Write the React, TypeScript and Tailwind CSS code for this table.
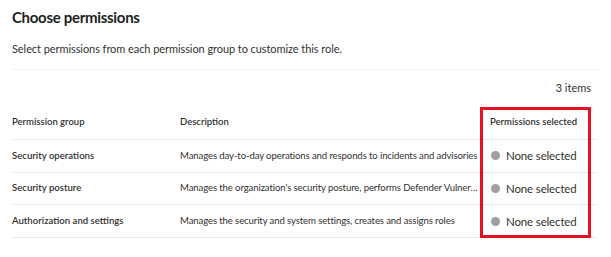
const rows = [
  {
    group: 'Security operations',
    desc: 'Manages day-to-day operations and responds to incidents and advisories',
  },
  {
    group: 'Security posture',
    desc: "Manages the organization's security posture, performs Defender Vulnerability Management operations",
  },
  {
    group: 'Authorization and settings',
    desc: 'Manages the security and system settings, creates and assigns roles',
  },
]

export default function App() {
  return (
    <div className="w-[611px] h-[257px] bg-white px-3 pt-[5px] text-[#323130] [font-family:Lato,sans-serif] overflow-hidden">
      <h1 className="text-[15px] leading-[24px] font-bold tracking-[-0.3px] text-[#201f1e]">Choose permissions</h1>
      <p className="mt-[12px] text-[11px] leading-[16px] tracking-[-0.07px]">
        Select permissions from each permission group to customize this role.
      </p>
      <div className="mt-[12px] mr-[1px] border-t border-[#f3f2f1]" />
      <div className="mt-[10px] pr-[8px] text-right text-[11px] leading-[16px]">3 items</div>

      <div className="relative mt-[11px] w-[586px]">
        <div className="grid grid-cols-[168px_310px_108px] h-[33px] items-center border-b border-[#edebe9] text-[9.5px] font-semibold pb-[2px]">
          <div>Permission group</div>
          <div>Description</div>
          <div className="whitespace-nowrap">Permissions selected</div>
        </div>
        {rows.map((r) => (
          <div
            key={r.group}
            className="grid grid-cols-[168px_310px_108px] h-[32.7px] items-center border-b border-[#edebe9] text-[9.6px]"
          >
            <div className="font-semibold">{r.group}</div>
            <div className="truncate pr-[10px] tracking-[-0.12px]">{r.desc}</div>
            <div className="flex items-center gap-[6px] pl-[1px] text-[11.5px] tracking-[-0.15px] whitespace-nowrap">
              <span className="w-[9px] h-[9px] rounded-full bg-[#a19f9d]" />
              None selected
            </div>
          </div>
        ))}
        <div className="absolute left-[468px] top-0 w-[111px] h-[131px] border-[3px] border-[#e81123]" />
      </div>
    </div>
  )
}
